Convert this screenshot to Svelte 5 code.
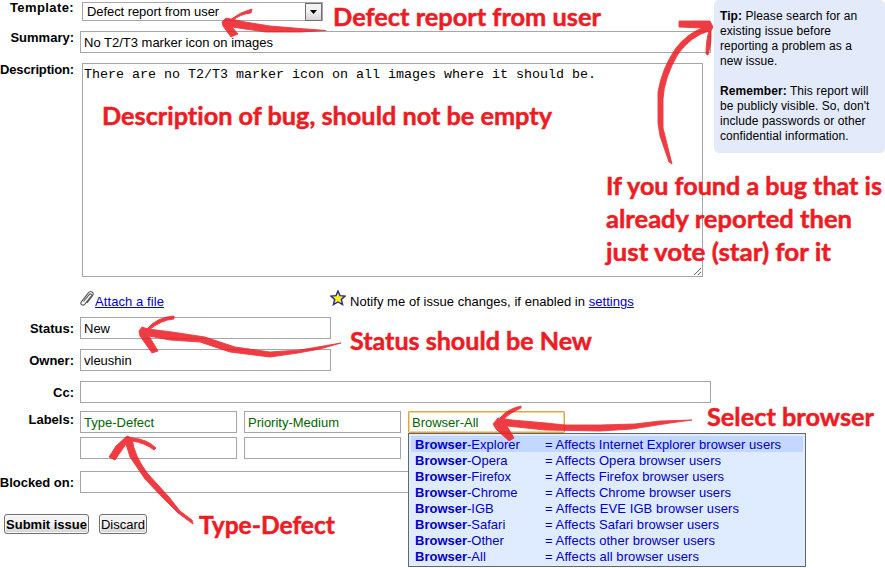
<script>
  const browsers = [
    ['Explorer', 'Internet Explorer', 236],
    ['Opera', 'Opera', 176],
    ['Firefox', 'Firefox', 179],
    ['Chrome', 'Chrome', 186],
    ['IGB', 'EVE IGB', 194],
    ['Safari', 'Safari', 174],
    ['Other', 'other', 170],
    ['All', 'all', 154]
  ];
  const notes = [
    { x: 333, y: 26, w: 268, text: 'Defect report from user' },
    { x: 102, y: 125, w: 450, text: 'Description of bug, should not be empty' },
    { x: 606, y: 195, w: 276, text: 'If you found a bug that is' },
    { x: 606, y: 228, w: 246, text: 'already reported then' },
    { x: 606, y: 261, w: 225, text: 'just vote (star) for it' },
    { x: 350, y: 350, w: 242, text: 'Status should be New' },
    { x: 707, y: 426, w: 167, text: 'Select browser' },
    { x: 199, y: 534, w: 136, text: 'Type-Defect' }
  ];
</script>

<div class="page">
  <form class="form">
    <div class="row template">
      <span class="label">Template:</span>
      <div class="select">
        <span>Defect report from user</span>
        <i><svg width="7" height="4" viewBox="0 0 7 4"><path d="M0 0h7L3.5 4z" /></svg></i>
      </div>
    </div>
    <div class="row summary">
      <span class="label">Summary:</span>
      <div class="field long">No T2/T3 marker icon on images</div>
    </div>
    <div class="row description">
      <span class="label">Description:</span>
      <div class="area">
        <span>There are no T2/T3 marker icon on all images where it should be.</span>
        <svg class="grip" width="9" height="9" viewBox="0 0 9 9"><path d="M1 8L8 1M5 8l3-3" /></svg>
      </div>
    </div>
    <div class="extras">
      <svg class="clip" width="16" height="17" viewBox="0 0 16 17">
        <path d="M4.5 11.5L10 4.8c1.6-1.8 3.6-.4 2.3 1.4l-6.5 8c-1.8 2.1-5.2.3-3.5-2.3l7-9c2.3-2.8 6.4-.6 4.4 2.6L8 12.8" />
      </svg>
      <a class="attach" href="#file">Attach a file</a>
      <svg class="star" width="16" height="16" viewBox="0 0 16 16">
        <path d="M8 1l2 4.6 5 .5-3.7 3.4 1.3 5L8 12l-4.6 2.5 1.3-5L1 6.1l5-.5z" />
      </svg>
      <span class="notify">Notify me of issue changes, if enabled in <a href="#settings">settings</a></span>
    </div>
    <div class="row status">
      <span class="label">Status:</span>
      <div class="field short">New</div>
    </div>
    <div class="row next">
      <span class="label">Owner:</span>
      <div class="field short">vleushin</div>
    </div>
    <div class="row next">
      <span class="label">Cc:</span>
      <div class="field long"></div>
    </div>
    <div class="row labels">
      <span class="label">Labels:</span>
      <div class="tags">
        <div class="field">Type-Defect</div>
        <div class="field">Priority-Medium</div>
        <div class="field focus">Browser-All</div>
        <div class="field"></div>
        <div class="field"></div>
      </div>
    </div>
    <div class="row blocked">
      <span class="label">Blocked on:</span>
      <div class="field long"></div>
    </div>
    <div class="buttons">
      <button type="button" class="submit">Submit issue</button>
      <button type="button" class="discard">Discard</button>
    </div>
  </form>

  <aside class="tip">
    <p><b>Tip:</b> Please search for an<br />existing issue before<br />reporting a problem as a<br />new issue.</p>
    <p><b>Remember:</b> This report will<br />be publicly visible. So, don't<br />include passwords or other<br />confidential information.</p>
  </aside>

  <div class="menu">
    {#each browsers as [name, target, width], i}
      <div class="option" class:active={i === 0}>
        <span class="name"><b>Browser</b>-{name}</span>
        <svg {width} height="16"><text x="0" y="13" textLength={width}>= Affects {target} browser users</text></svg>
      </div>
    {/each}
  </div>

  <svg class="notes" width="885" height="568" viewBox="0 0 885 568">
    <g class="arrows">
      <path d="M222 22L226 18L245 22L270 26L300 28.5L326 30.5L300 32L266 32L245 29L232 27L238 34L231 37L223 26ZM230 20Q240 12 252 9L251 13Q240 14 232 21Z" />
      <path d="M679 21L710 21L713 27L711 31Q712 42 708 55L706 54Q706 40 709 31Q691 36 678 54Q664 78 663 99L663 128L672 164L669 162L660 136L658 123L658 92Q662 68 676 48Q687 34 702 28L679 27Z" />
      <path d="M139 331L142 327L148 329L172 332L205 337L235 347L270 352L300 350L341 343L320 349L298 353L270 357L230 352L200 342L170 340L149 336L158 351L152 353L140 336ZM147 329Q157 317 174 316L174 319Q161 320 149 330Z" />
      <path d="M127 436L132 438Q134 456 148 474L169 497L180 511L192 520L193 524L178 513L162 497L145 479L130 457L126 444L115 460L109 457L116 446ZM132 438Q147 439 156 448L154 450Q145 443 132 441Z" />
      <path d="M493 424L498 418L512 420L546 423L565 425L600 425L635 424L660 421L692 420L670 423L632 429L600 431L545 430L507 426L514 438L509 441L496 429ZM500 418Q507 409 521 406L521 408Q509 413 503 420Z" />
    </g>
    {#each notes as note}
      <text x={note.x} y={note.y} textLength={note.w} lengthAdjust="spacingAndGlyphs">{note.text}</text>
    {/each}
  </svg>
</div>

<style>
  .page {
    position: relative;
    width: 885px;
    height: 568px;
    overflow: hidden;
    display: flex;
    justify-content: space-between;
    align-items: flex-start;
    background: #fff;
    color: #000;
    font: 13px/16px "Liberation Sans", Arial, sans-serif;
    white-space: nowrap;
  }
  .form { width: 711px; padding-top: 2px; }
  .row { display: flex; align-items: flex-start; gap: 6px; }
  .label {
    width: 74px;
    flex: none;
    display: flex;
    justify-content: flex-end;
    font-weight: bold;
  }
  .field {
    box-sizing: border-box;
    height: 22px;
    border: 1px solid #a5a5ab;
    padding: 3px;
    background: #fff;
  }
  .long { width: 631px; }
  .short { width: 251px; }
  .template .label { margin-top: -2px; letter-spacing: 0.4px; }
  .select {
    box-sizing: border-box;
    width: 241px;
    height: 19px;
    margin-left: 2px;
    border: 1px solid #a5a5ab;
    display: flex;
    justify-content: space-between;
    padding-left: 4px;
    line-height: 18px;
    letter-spacing: -0.07px;
  }
  .select i {
    box-sizing: border-box;
    width: 17px;
    height: 18px;
    border: 1px solid #707070;
    background: linear-gradient(#f2f2f2 45%, #d4d4d4);
    display: flex;
    align-items: center;
    justify-content: center;
  }
  .summary { margin-top: 10px; }
  .summary .label { margin-top: -1px; }
  .description { margin-top: 10px; }
  .description .label { margin-top: -1px; letter-spacing: -0.16px; }
  .area {
    box-sizing: border-box;
    position: relative;
    width: 621px;
    height: 214px;
    margin-left: 2px;
    border: 1px solid #a5a5ab;
    padding: 3px 1px;
    font: 13.33px/16px "Liberation Mono", "Courier New", monospace;
  }
  .grip { position: absolute; right: 0; bottom: 0; fill: none; stroke: #666; }
  .extras {
    height: 40px;
    box-sizing: border-box;
    padding: 13px 0 0 79px;
    display: flex;
    align-items: flex-start;
  }
  a { color: #00c; }
  .clip { fill: none; stroke: #555; stroke-width: 1.1; }
  .attach { margin-top: 4px; width: 235px; letter-spacing: 0.08px; }
  .star { fill: #ffef20; stroke: #2525a0; stroke-width: 1.4; }
  .notify { margin: 4px 0 0 4px; letter-spacing: 0.04px; }
  .status .label, .next .label { margin-top: 4px; }
  .next { margin-top: 10px; }
  .labels { margin-top: 8px; }
  .labels .label { margin-top: 1px; }
  .tags { display: grid; grid-template-columns: repeat(3, 157px); gap: 4px 7px; }
  .tags .field { color: #060; }
  .tags .focus { border-color: #dca545; border-radius: 1px; box-shadow: inset 0 0 0 1px #f0d59a; }
  .blocked { margin-top: 12px; }
  .blocked .label { margin-top: 4px; letter-spacing: -0.02px; }
  .buttons { display: flex; gap: 10px; margin: 21px 0 0 4px; }
  button {
    height: 20px;
    padding: 1px 0 0;
    border: 1px solid #707070;
    border-radius: 3px;
    background: linear-gradient(#f3f3f3 45%, #d2d2d2);
    box-shadow: inset 0 0 0 1px #fafafa;
    color: #000;
    font: 13px/16px "Liberation Sans", Arial, sans-serif;
  }
  .submit { width: 85px; font-weight: bold; }
  .discard { width: 48px; }
  .tip {
    box-sizing: border-box;
    width: 171px;
    height: 153px;
    padding: 9px 0 0 6px;
    border-radius: 5px;
    background: #e3eaf9;
    font-size: 12px;
    line-height: 15px;
    letter-spacing: 0.08px;
  }
  .tip p { margin: 0 0 15px; }
  .menu {
    position: absolute;
    left: 408px;
    top: 433px;
    box-sizing: border-box;
    width: 398px;
    height: 134px;
    border: 1px solid #666;
    padding: 2px;
    background: #dfebff;
    color: #00c;
  }
  .option { display: flex; height: 16px; padding-left: 4px; line-height: 18px; }
  .option svg { fill: #00c; overflow: visible; }
  .option.active { background: #c3d7ff; }
  .name { width: 130px; }
  .notes { position: absolute; left: 0; top: 0; pointer-events: none; }
  .arrows {
    fill: #ed1c24;
    stroke: #ed1c24;
    stroke-width: 0.9px;
    stroke-linejoin: round;
    opacity: 0.86;
  }
  .notes text {
    fill: #ed1c24;
    stroke: #ed1c24;
    stroke-width: 0.5px;
    font: bold 25px Lato, sans-serif;
    font-variant-ligatures: none;
  }
</style>
